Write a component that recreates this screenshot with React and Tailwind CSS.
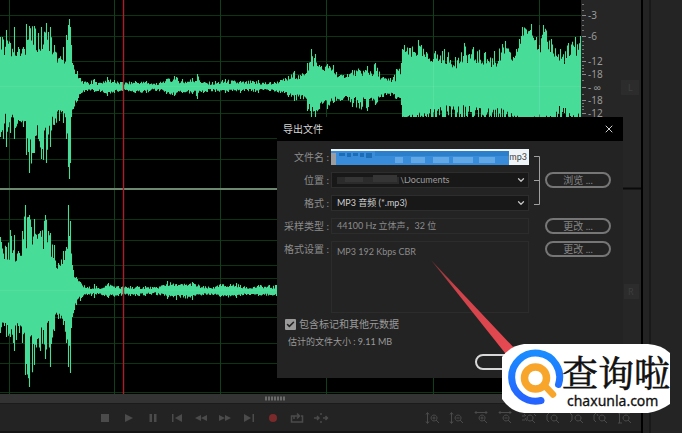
import { Check, ChevronDown, X } from 'lucide-react';

// [x, peak up, body up, peak down, body down]
const leftChannel = [
  [0, 50, 32, 50, 26], [6, 57, 30, 60, 26], [10, 44, 30, 46, 28], [14, 60, 32, 52, 26],
  [19, 38, 26, 34, 22], [23, 40, 24, 40, 28], [26, 63, 36, 68, 36], [29, 61, 44, 86, 44], [34, 61, 38, 66, 40],
  [38, 54, 34, 52, 36], [41, 60, 34, 72, 36], [46, 64, 36, 76, 34], [50, 60, 34, 60, 32],
  [54, 42, 28, 38, 26], [59, 29, 22, 34, 22], [63, 40, 22, 36, 22], [66, 52, 26, 52, 28],
  [68, 62, 56, 80, 60], [69, 68, 58, 92, 70], [70, 60, 54, 76, 60], [71, 42, 26, 30, 26], [73, 22, 18, 22, 16],
  [77, 16, 8, 14, 8], [80, 9, 4, 7, 4], [87, 5, 2, 4, 2], [94, 8, 2, 5, 2], [98, 4, 2, 4, 2],
  [107, 10, 5, 9, 5], [114, 7, 3, 6, 3], [122, 5, 2, 4, 2], [135, 6, 3, 6, 3], [146, 6, 3, 6, 3],
  [156, 4, 1, 4, 1], [166, 8, 4, 7, 3], [174, 11, 5, 9, 5], [182, 8, 3, 6, 3], [192, 9, 4, 7, 3],
  [197, 13, 5, 12, 4], [204, 5, 2, 5, 2], [215, 6, 2, 5, 2], [225, 8, 3, 6, 3], [240, 6, 3, 6, 2],
  [258, 7, 2, 6, 2], [270, 5, 2, 4, 2], [280, 7, 4, 6, 3], [288, 11, 6, 10, 5], [294, 16, 8, 14, 8],
  [300, 12, 7, 12, 6], [307, 24, 14, 24, 12], [311, 38, 20, 30, 20], [315, 33, 20, 30, 20],
  [319, 22, 16, 22, 14], [327, 23, 15, 22, 12], [333, 22, 12, 16, 10], [340, 12, 8, 14, 8],
  [352, 17, 11, 20, 10], [367, 21, 11, 24, 10], [375, 24, 10, 18, 9], [383, 10, 6, 10, 6],
  [390, 9, 4, 9, 5], [396, 18, 6, 12, 7], [401, 24, 12, 18, 12], [402, 38, 30, 30, 28], [404, 42, 32, 40, 30],
  [410, 39, 28, 40, 28], [418, 47, 30, 40, 25], [426, 35, 26, 38, 22], [435, 36, 24, 40, 22],
  [444, 38, 24, 38, 18], [455, 30, 18, 40, 20], [464, 44, 24, 36, 18], [473, 40, 24, 38, 20],
  [485, 35, 22, 40, 22], [494, 36, 18, 40, 20], [505, 46, 28, 38, 22], [513, 30, 25, 36, 26],
  [519, 48, 38, 40, 30], [522, 60, 50, 40, 30], [531, 63, 54, 40, 30], [536, 50, 42, 40, 28],
  [538, 38, 30, 36, 26], [543, 62, 40, 40, 30], [551, 48, 34, 40, 26], [560, 38, 22, 36, 16],
  [568, 44, 24, 40, 24], [575, 50, 28, 40, 24], [580, 55, 38, 40, 28],
];

const rightChannel = [
  [0, 54, 30, 42, 32], [6, 44, 28, 46, 30], [10, 61, 30, 46, 28], [14, 56, 28, 60, 30],
  [19, 38, 22, 42, 28], [22, 60, 32, 52, 34], [25, 86, 40, 84, 44], [29, 76, 42, 96, 48],
  [34, 72, 38, 74, 34], [40, 60, 36, 60, 32], [45, 76, 36, 68, 32], [50, 58, 32, 76, 28],
  [54, 46, 24, 40, 22], [58, 28, 20, 28, 20], [63, 40, 25, 34, 22], [66, 44, 30, 52, 30],
  [68, 86, 50, 76, 50], [70, 70, 46, 82, 50], [72, 26, 18, 26, 18], [76, 14, 9, 14, 8],
  [80, 9, 4, 10, 5], [87, 4, 2, 4, 2], [94, 7, 2, 7, 2], [98, 3, 1, 3, 1], [108, 8, 5, 7, 4],
  [118, 5, 2, 5, 2], [130, 5, 2, 5, 3], [145, 5, 2, 5, 2], [156, 4, 2, 4, 1], [167, 10, 5, 8, 4],
  [176, 7, 4, 9, 4], [192, 9, 5, 9, 4], [203, 5, 2, 4, 2], [213, 4, 2, 4, 2], [220, 7, 4, 6, 4],
  [236, 8, 4, 7, 4], [246, 4, 2, 4, 2], [258, 6, 3, 5, 3], [276, 6, 2, 5, 2], [320, 20, 10, 20, 10],
];

const gridLines = [15, 36, 61, 74, 100, 113, 138, 159, 219, 240, 265, 278, 304, 317, 343, 363, 392];
const timeLines = [9, 114, 220, 326, 433, 539];

const rulerLabels = [
  [15, '-3'], [36, '-6'], [61, '-12'], [74, '-18'], [87, '- ∞'], [100, '-18'], [113, '-12'],
];

const noise = (n) => {
  const v = Math.sin(n * 12.9898) * 43758.5453;
  return v - Math.floor(v);
};

// One vertical bar per column, its height picked between body and peak
const wavePath = (points, center) => {
  let d = '';
  let i = 0;
  for (let x = 0; x <= points[points.length - 1][0]; x += 1) {
    while (i < points.length - 2 && points[i + 1][0] <= x) i += 1;
    const a = points[i];
    const b = points[i + 1];
    const t = (x - a[0]) / (b[0] - a[0]);
    const mix = (k) => a[k] + (b[k] - a[k]) * t;
    const exact = x === a[0];
    const r1 = exact ? 1 : noise(x + center) ** 1.5;
    const r2 = exact ? 1 : noise(x * 3 + center) ** 1.5;
    const up = mix(2) + (mix(1) - mix(2)) * r1;
    const down = mix(4) + (mix(3) - mix(4)) * r2;
    d += `M${x + 0.5} ${(center - up).toFixed(1)}V${(center + down).toFixed(1)}`;
  }
  return d;
};

const Waveform = () => (
  <svg className="block h-full min-w-0 flex-1 bg-black" viewBox="0 0 581 394" preserveAspectRatio="none" aria-label="Waveform">
    {gridLines.map((y) => <path key={y} d={`M0 ${y + 0.5}H581`} stroke="#0d3513" />)}
    {timeLines.map((x) => <path key={x} d={`M${x + 0.5} 0V394`} stroke="#0e4019" />)}
    <path d={wavePath(leftChannel, 87)} stroke="#47dc98" strokeWidth="1.1" />
    <path d={wavePath(rightChannel, 291)} stroke="#47dc98" strokeWidth="1.1" />
    <path d="M0 86.5H581M0 290.5H581" stroke="#5fe0a4" strokeOpacity="0.5" />
    <path d="M539.5 25V117M433.5 60V117" stroke="#7be6b4" strokeOpacity="0.35" />
    <path d="M0 189H581" stroke="#6d8a70" strokeWidth="2" />
    <path d="M123.5 0V394" stroke="#a81f2b" strokeWidth="1.4" />
  </svg>
);

const Ruler = () => (
  <svg className="h-full w-[60px] shrink-0 bg-[#262626]" aria-label="Decibel scale">
    {[4, 10, 15, 20, 25, 30, 36, 41, 45, 49, 53, 57, 61, 65, 68, 71, 74, 80, 87, 94, 100, 103, 106, 109, 113].map((y) => (
      <path key={y} d={`M1 ${y + 0.5}h2`} stroke="#777" />
    ))}
    {rulerLabels.map(([y, label]) => (
      <g key={y}>
        <path d={`M1 ${y + 0.5}h4`} stroke="#8a8a8a" />
        <text x="7" y={y + 4} fontSize="10" fill="#9a9a9a" className="font-['Noto_Sans',sans-serif]">{label}</text>
      </g>
    ))}
    <path d="M0 188.5H60" stroke="#0a0a0a" strokeWidth="2" />
    <rect x="40" y="80" width="18" height="15" fill="#2c2c2c" />
    <text x="47" y="91" fontSize="9" fill="#3e3e3e">L</text>
    <rect x="43" y="284" width="15" height="15" fill="#2c2c2c" />
    <text x="47" y="295" fontSize="9" fill="#3e3e3e">R</text>
  </svg>
);

const transport = [
  ['Stop', <path d="M4 4h8v8H4z" fill="currentColor" />],
  ['Play', <path d="M4 4l8 4-8 4z" fill="currentColor" />],
  ['Pause', <path d="M4.500 4h2.500v8H4.500zM9 4h2.500v8H9z" fill="currentColor" />],
  ['Go to start', <path d="M3 4h1.500v8H3zM13 4v8L6 8z" fill="currentColor" />],
  ['Rewind', <path d="M8 5v6L2 8zM14 5v6L8 8z" fill="currentColor" />],
  ['Fast forward', <path d="M2 5v6l6-3zM8 5v6l6-3z" fill="currentColor" />],
  ['Go to end', <path d="M11.500 4H13v8h-1.500zM3 4v8l7-4z" fill="currentColor" />],
  ['Record', <circle cx="8" cy="8" r="4" fill="#7a2a2a" />],
  ['Loop', <path d="M5 6H2.500v6h11V6H12M5 9V6h5M8 3.500l2.500 2.500L8 8.500" stroke="currentColor" strokeWidth="1.500" />],
  ['Skip selection', <path d="M1 8h5M4 6l2 2-2 2M10 8h5M12.500 6l2 2-2 2M8 3v2M8 11v2" stroke="currentColor" strokeWidth="1.400" />],
];

const lens = 'M9 5a3 3 0 1 0 .1 0M11 10l3 3';
const zoomTools = [
  ['Zoom in amplitude', `${lens}M2.5 3v10M1 4.500l1.500-2 1.500 2M1 11.500l1.500 2 1.500-2M7.500 8h3M9 6.500v3`],
  ['Zoom out amplitude', `${lens}M2.500 3v10M1 4.500l1.500-2 1.500 2M1 11.500l1.500 2 1.500-2M7.500 8h3`],
  ['Zoom in time', `${lens}M2 2.500h12M3.500 1L2 2.500 3.500 4M12.500 1L14 2.500 12.500 4M7.500 8h3M9 6.500v3`],
  ['Zoom out time', `${lens}M2 2.500h12M3.500 1L2 2.500 3.500 4M12.500 1L14 2.500 12.500 4M7.500 8h3`],
  ['Zoom reset', `${lens}M1 6h3M1 10h3M3 4l2 2M13 4l2 2M4 8l2 3`],
  ['Zoom to in point', `${lens}M4 3L2 5v5l2 2`],
  ['Zoom to out point', `${lens}M1 3l2 2v5l-2 2`],
  ['Zoom to selection', `${lens}M3 3L1 5v5l2 2M4 4l1 2`],
  ['Zoom to track', `${lens}M2.500 3v10M1 3h12M1 13h4`],
];

const ToolButton = ({ label, children }) => (
  <button type="button" aria-label={label} className="flex w-6 justify-center text-[#4b4b4b]">
    <svg viewBox="0 0 16 16" fill="none" className="size-4">{children}</svg>
  </button>
);

const FieldLabel = ({ htmlFor, children }) => (
  <label htmlFor={htmlFor} className="pr-0.5 text-right whitespace-nowrap text-[#8c8c8c]">{children}</label>
);

const PillButton = ({ children, ...props }) => (
  <button type="button" className="h-4 w-[66px] rounded-full border-2 border-[#767676] text-center leading-3 text-[#858585]" {...props}>
    {children}
  </button>
);

const SelectField = ({ id, children, tone }) => (
  <div className="relative h-4">
    <select id={id} className={`block h-4 w-full appearance-none border border-[#2d2d2d] bg-[#181818] text-[9px] leading-3 outline-none ${tone}`}>
      {children}
    </select>
    <ChevronDown strokeWidth={3} className="pointer-events-none absolute top-[3px] right-[3px] size-2.5 text-[#c4c4c4]" />
  </div>
);

const ExportDialog = () => (
  <section
    role="dialog"
    aria-labelledby="export-title"
    className="absolute top-[117px] left-[277px] w-[346px] bg-[#232323] font-[Lato,'Noto_Sans_CJK_SC',sans-serif] text-[10px] leading-4"
  >
    <header className="flex h-6 items-center justify-between bg-black pr-2 pl-1.5">
      <h1 id="export-title" className="text-[#d6d6d6]">导出文件</h1>
      <button type="button" aria-label="关闭" className="text-[#d0d0d0]"><X className="size-3" /></button>
    </header>
    <form className="pt-2 pr-3 pb-2">
      <div className="grid grid-cols-[54px_minmax(0,1fr)_16px_66px] gap-y-[7px]">
        <FieldLabel htmlFor="file-name">文件名 :</FieldLabel>
        <div className="relative h-4">
          <input id="file-name" defaultValue="mp3" className="block h-4 w-full bg-[#eef4f8] px-0.5 text-right text-[9px] text-[#444] outline-none" />
          <svg className="pointer-events-none absolute top-0.5 left-0 h-[14px] w-[178px]" viewBox="0 0 178 14" preserveAspectRatio="none">
            <path d="M0 0h178v14H0z" fill="#398cd9" />
            <path d="M44 0h134v5H44z" fill="#2c7fcb" />
            <path d="M0 2h5v12H0z" fill="#9a9da2" />
            <path d="M8 2h6v3H8zM16 2h4v4h-4zM22 2h5v3h-5zM29 2h4v4h-4zM35 2h6v5h-6z" fill="#1c6cb6" />
            <path d="M64 6h8v6h-8zM80 6h14v6H80zM102 6h16v6h-16zM122 6h20v6h-20zM148 6h16v6h-16z" fill="#62a7e6" />
          </svg>
        </div>
        <svg className="row-span-3 h-[62px] w-4" fill="none">
          <path d="M5 7.500h5.500v48H5M5 31.500h5" stroke="#a0a0a0" />
        </svg>
        <span />

        <FieldLabel htmlFor="location">位置 :</FieldLabel>
        <div className="relative h-4">
          <SelectField id="location" tone="pl-[68px] text-[#9c9c9c]">
            <option>\Documents</option>
          </SelectField>
          <svg className="pointer-events-none absolute top-0.5 left-1.5 h-2.5 w-[118px]" viewBox="0 0 118 10">
            <path d="M60 0h58v3H60z" fill="#181818" />
            <path d="M0 3h62v7H0z" fill="#2b2b2b" />
            <path d="M8 3h18v5H8zM36 1h24v7H36z" fill="#353535" />
          </svg>
        </div>
        <PillButton>浏览 ...</PillButton>

        <FieldLabel htmlFor="format">格式 :</FieldLabel>
        <SelectField id="format" tone="pl-[5px] text-[#cfcfcf]">
          <option>MP3 音频 (*.mp3)</option>
        </SelectField>
        <span />

        <FieldLabel htmlFor="sample-type">采样类型 :</FieldLabel>
        <output id="sample-type" className="block h-4 border border-[#2c2c2c] px-[5px] text-[9px] leading-[14px] text-[#8c8c8c]">44100 Hz 立体声，32 位</output>
        <span />
        <PillButton>更改 ...</PillButton>

        <FieldLabel htmlFor="format-settings">格式设置 :</FieldLabel>
        <output id="format-settings" className="block h-[72px] border border-[#2c2c2c] px-[5px] py-0.5 text-[9px] text-[#8c8c8c]">MP3 192 Kbps CBR</output>
        <span />
        <PillButton>更改 ...</PillButton>
      </div>

      <label className="mt-[3px] ml-2 flex items-center gap-[3px] text-[#9a9a9a]">
        <span className="relative size-[11px]">
          <input type="checkbox" defaultChecked className="block size-[11px] appearance-none rounded-[1px] bg-[#9a9a9a]" />
          <Check strokeWidth={4} className="pointer-events-none absolute top-px left-px size-[9px] text-[#222]" />
        </span>
        包含标记和其他元数据
      </label>
      <p className="mt-0.5 ml-[11px] text-[9px] text-[#9a9a9a]">估计的文件大小 : 9.11 MB</p>
      <div className="mt-1 flex justify-end gap-1">
        <button type="submit" aria-label="确定" className="h-4 w-[66px] rounded-full border-2 border-[#d8d8d8]" />
        <PillButton aria-label="取消" />
      </div>
    </form>
  </section>
);

const Pointer = () => (
  <svg className="pointer-events-none absolute top-[258px] left-[429px] h-[104px] w-[92px]" viewBox="0 0 92 104">
    <defs>
      <linearGradient id="pointer" x1="0" y1="0" x2="1" y2="1">
        <stop offset="0" stopColor="#7c3236" />
        <stop offset="0.3" stopColor="#cf424a" />
        <stop offset="1" stopColor="#ea4a52" />
      </linearGradient>
    </defs>
    <path d="M2 2L87 92 80 100z" fill="url(#pointer)" />
  </svg>
);

const SiteBadge = () => (
  <a href="#chaxunla" className="absolute top-[344px] left-[502px] block h-[70px] w-[168px] text-black">
    <svg className="block size-full" viewBox="0 0 168 70" fill="none">
      <defs>
        <linearGradient id="ring" x1="0" y1="0" x2="0" y2="1">
          <stop offset="0" stopColor="#1a8cff" />
          <stop offset="1" stopColor="#2563ff" />
        </linearGradient>
      </defs>
      <path d="M22 0H146Q160 1 168 9V60Q158 67 146 69H22Q8 67 0 55V13Q8 2 22 0z" fill="#fff" />
      <path d="M56.500 40.500A24 24 0 1 0 39 56.500" stroke="url(#ring)" strokeWidth="7" strokeLinecap="round" />
      <circle cx="33.500" cy="34" r="11" stroke="#f8a52c" strokeWidth="7.500" />
      <path d="M43 42l8 8.500" stroke="#f8a52c" strokeWidth="6.500" strokeLinecap="round" />
      <text x="60" y="43" fontSize="36" fill="#111" stroke="#111" strokeWidth="0.600" className="font-['Noto_Serif_CJK_SC','Noto_Sans_CJK_SC',serif]">查询啦</text>
      <text x="65" y="62" fontSize="14" fill="#111" stroke="#111" strokeWidth="0.300" className="font-['Noto_Sans',sans-serif]">chaxunla.com</text>
    </svg>
  </a>
);

const App = () => (
  <main className="relative flex h-screen overflow-hidden bg-[#232323]">
    <div className="flex min-w-0 flex-1 flex-col">
      <div className="flex min-h-0 flex-1">
        <Waveform />
        <Ruler />
      </div>
      <div className="flex h-[9px] items-center bg-[#333] pl-[265px]">
        <svg className="h-[5px] w-5"><path d="M0 2.500h20" stroke="#6a6a6a" strokeWidth="4" strokeDasharray="2 1" /></svg>
      </div>
      <div className="flex h-7 items-center justify-between border-t border-[#1b1b1b] pr-1 pl-[93px]">
        <div className="flex">
          {transport.map(([label, icon]) => <ToolButton key={label} label={label}>{icon}</ToolButton>)}
        </div>
        <div className="flex">
          {zoomTools.map(([label, d]) => (
            <ToolButton key={label} label={label}><path d={d} stroke="currentColor" /></ToolButton>
          ))}
        </div>
      </div>
      <div className="h-0.5 bg-[#151515]" />
    </div>
    <aside className="w-[41px] border-l-2 border-black pl-1.5">
      <div className="h-full border-l-2 border-[#191919] bg-[#242424]" />
    </aside>
    <ExportDialog />
    <Pointer />
    <SiteBadge />
  </main>
);

export default App;
